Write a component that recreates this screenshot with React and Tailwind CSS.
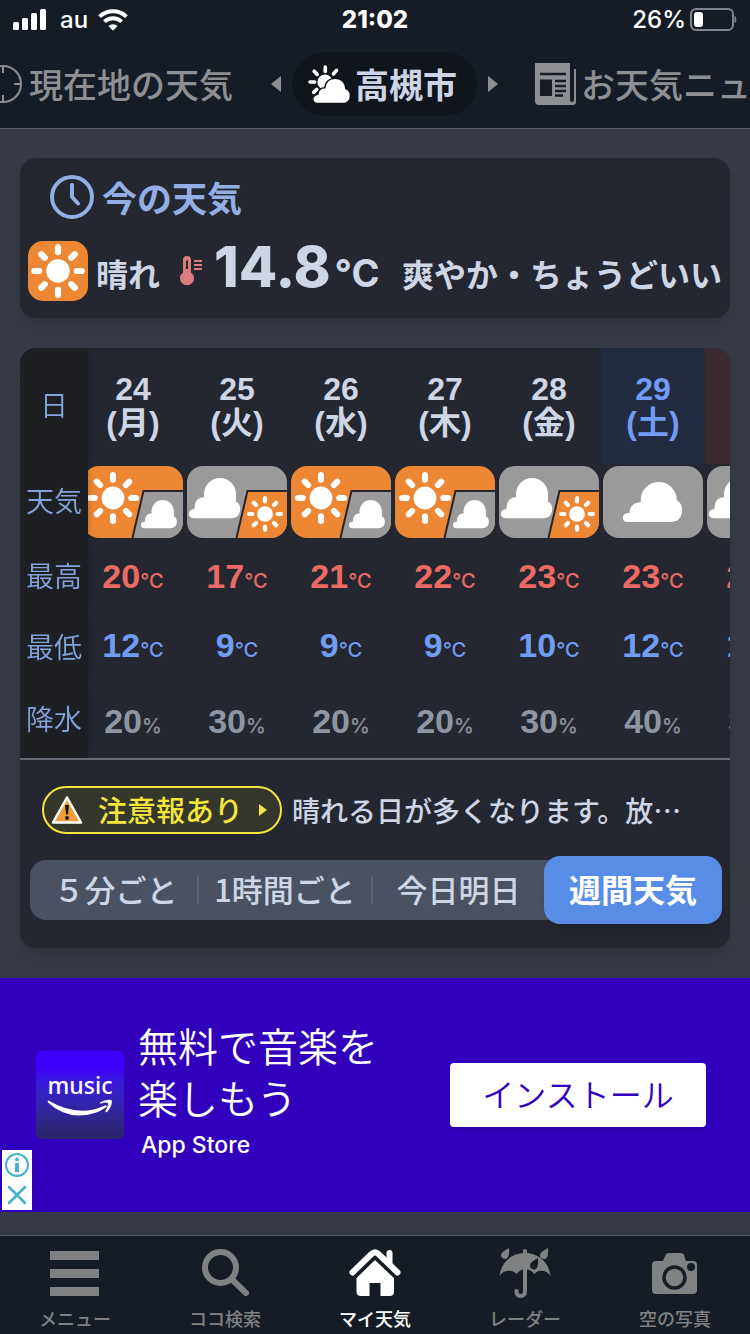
import React, { useLayoutEffect, useRef } from 'react';

const days = [
  { date: '24', day: '月', icon: 'sunCloud', high: '20', low: '12', rain: '20' },
  { date: '25', day: '火', icon: 'cloudSun', high: '17', low: '9', rain: '30' },
  { date: '26', day: '水', icon: 'sunCloud', high: '21', low: '9', rain: '20' },
  { date: '27', day: '木', icon: 'sunCloud', high: '22', low: '9', rain: '20' },
  { date: '28', day: '金', icon: 'cloudSun', high: '23', low: '10', rain: '30' },
  { date: '29', day: '土', icon: 'cloud', high: '23', low: '12', rain: '40' },
  { date: '30', day: '日', icon: 'cloudSun', high: '22', low: '13', rain: '30' },
];

const ICON_LABELS = {
  sunCloud: '晴れ時々曇り',
  cloudSun: '曇り時々晴れ',
  cloud: '曇り',
};

const ANGLES = [0, 45, 90, 135, 180, 225, 270, 315];

const Sun = ({ cx, cy, scale = 1 }) => (
  <g transform={`translate(${cx} ${cy}) scale(${scale})`} stroke="#fff" strokeWidth="6" strokeLinecap="round">
    <circle r="11.4" fill="#fff" stroke="none" />
    {ANGLES.map((a) => (
      <path key={a} d="M0 -18.2V-23" transform={`rotate(${a})`} />
    ))}
  </g>
);

const Cloud = ({ x = 0, y = 0, scale = 1 }) => (
  <g transform={`translate(${x} ${y}) scale(${scale})`} fill="#fff">
    <circle cx="31" cy="16" r="16" />
    <path d="M46.800 18V23.500Q51.300 25.500 51.300 31.500Q50.500 40.300 42 40.300H4.700Q0 40 0 35.600Q0.300 31 5.500 31Q5 19 17 19Z" />
  </g>
);

const WideCloud = () => (
  <g fill="#fff">
    <circle cx="55.7" cy="34" r="18" />
    <path d="M73 33.500Q79.200 37 79.200 44.500Q78 56 67.500 56H24.400Q20 56 19.800 51.500Q20 47 26.500 47Q27 36.500 38 36Z" />
  </g>
);

const WeatherIcon = ({ type, id }) => {
  const sunny = type === 'sunCloud';
  return (
    <svg viewBox="0 0 100 72" className="block w-[100px] h-[72px] mx-auto" role="img" aria-label={ICON_LABELS[type]}>
      <clipPath id={id}>
        <rect width="100" height="72" rx="16" />
      </clipPath>
      <g clipPath={`url(#${id})`}>
        <rect width="100" height="72" fill={sunny ? '#ee8733' : '#9a9a9a'} />
        {sunny && <Sun cx={30} cy={32} />}
        {type === 'cloudSun' && <Cloud x={2} y={12} />}
        {type === 'cloud' && <WideCloud />}
        {type !== 'cloud' && (
          <path d="M60.5 25H102V74H49Z" fill={sunny ? '#9a9a9a' : '#ee8733'} stroke="#24272f" strokeWidth="2" />
        )}
        {sunny && <Cloud x={58} y={34} scale={0.7} />}
        {type === 'cloudSun' && <Sun cx={78} cy={48} scale={0.69} />}
      </g>
    </svg>
  );
};

const StatusBar = () => (
  <div className="h-10 px-3 grid grid-cols-3 items-center text-white text-2xl font-medium font-['Inter',sans-serif]">
    <div className="flex items-center gap-[14px]">
      <svg viewBox="0 0 34 22" className="w-[34px] h-[22px]" fill="#fff">
        <rect x="1" y="13" width="6" height="8" rx="1.5" />
        <rect x="10" y="9" width="6" height="12" rx="1.5" />
        <rect x="19" y="4" width="6" height="17" rx="1.5" />
        <rect x="28" y="0" width="6" height="21" rx="1.5" />
      </svg>
      <span>au</span>
      <svg viewBox="0 0 30 22" className="w-[30px] h-[22px] -ml-1" fill="none" stroke="#fff" strokeWidth="4">
        <path d="M1.6 7.6A19.3 19.3 0 0 1 28.4 7.6" />
        <path d="M6.4 12.6A12.4 12.4 0 0 1 23.6 12.6" />
        <path d="M10.4 17A7 7 0 0 1 19.6 17L15 21.8Z" fill="#fff" stroke="none" />
      </svg>
    </div>
    <span className="text-center font-extrabold">21:02</span>
    <div className="flex items-center justify-end gap-1">
      <span>26%</span>
      <svg viewBox="0 0 48 24" className="w-12 h-6" fill="none">
        <rect x="1" y="1" width="42" height="21" rx="5" stroke="#80858c" strokeWidth="2" />
        <rect x="4" y="4" width="9" height="15" rx="3" fill="#fff" />
        <path d="M45 8.500Q47 11.500 45 14.500Z" fill="#80858c" stroke="#80858c" />
      </svg>
    </div>
  </div>
);

const LocationTabs = () => (
  <nav className="h-[88px] flex items-center overflow-hidden whitespace-nowrap text-[34px] leading-none font-medium text-[#8d8f93]">
    <button type="button" className="shrink-0 flex items-center gap-[7px] -ml-4">
      <svg viewBox="0 0 38 38" className="w-[38px] h-[38px]" fill="none" stroke="currentColor" strokeWidth="2">
        <circle cx="19" cy="19" r="18" />
        <path d="M19 1V8M19 30V37M30 19H37M1 19H8" />
      </svg>
      <span>現在地の天気</span>
    </button>
    <svg viewBox="0 0 10 16" className="shrink-0 w-[10px] h-4 ml-[38px] mr-[11px]" fill="#8d8f93">
      <path d="M10 0V16L0 8Z" />
    </svg>
    <button type="button" className="shrink-0 h-16 pl-4 pr-5 rounded-full bg-[#10141b] flex items-center gap-1 text-[#ccd4e6] font-bold">
      <svg viewBox="0 0 43 40" className="w-[43px] h-10">
        <g stroke="#fff" strokeWidth="3.600" strokeLinecap="round">
          <path d="M17.300 3V7.500M6.200 7.200L9.200 10.400M28.500 6.400L25.400 10M2 18H6.600M5.700 28.400L8.800 25.400" />
        </g>
        <circle cx="17" cy="18" r="7.600" fill="#fff" />
        <path
          d="M9.500 39.500C6 39.500 4 36.500 5 33.500C5.800 31.200 8 30.500 10 30C10 26.500 13 23.500 16.800 23.800C17.500 17.500 22 14.300 27.500 14.300C33.500 14.300 37.600 18.500 37.800 24.600C40.800 25.900 42.500 28.500 42.500 31.800C42.500 36.500 39.200 39.500 35 39.500Z"
          fill="#fff"
          stroke="#10141b"
          strokeWidth="1.500"
        />
      </svg>
      <span>高槻市</span>
    </button>
    <svg viewBox="0 0 10 16" className="shrink-0 w-[10px] h-4 ml-[11px] mr-9" fill="#8d8f93">
      <path d="M0 0V16L10 8Z" />
    </svg>
    <button type="button" className="shrink-0 flex items-center gap-1">
      <svg viewBox="0 0 43 42" className="w-[43px] h-[42px]">
        <path d="M1 0H36V37Q36 39 38 39Q40 39 40 37V6H42V39Q42 42 39 42H5Q1 42 1 38Z" fill="#8d8f93" />
        <path d="M6 11H32M21 18H32M21 23H32M21 28H32M21 32.500H29" stroke="#161c25" strokeWidth="2.500" />
        <path d="M6 16.500H18V33H6Z" fill="#161c25" />
      </svg>
      <span>お天気ニュ</span>
    </button>
  </nav>
);

const CurrentWeather = () => (
  <section className="rounded-2xl bg-[#24272f] shadow-lg h-40 px-2 pt-4">
    <h2 className="pl-[22px] flex items-center gap-2 text-[35px] leading-[46px] font-bold text-[#92aee3]">
      <svg viewBox="0 0 44 44" className="w-11 h-11" fill="none" stroke="currentColor" strokeWidth="4" strokeLinecap="round" strokeLinejoin="round">
        <circle cx="22" cy="22" r="20" />
        <path d="M22 10V22L28 28.500" />
      </svg>
      <span>今の天気</span>
    </h2>
    <div className="mt-[21px] flex items-center whitespace-nowrap text-[32px] leading-none font-bold text-[#ced6e6]">
      <svg viewBox="0 0 60 60" className="shrink-0 w-[60px] h-[60px]">
        <rect width="60" height="60" rx="15" fill="#ee8733" />
        <Sun cx={30} cy={30} scale={1.03} />
      </svg>
      <span className="ml-2 mt-1">晴れ</span>
      <svg viewBox="0 0 24 32" className="shrink-0 w-6 h-8 ml-5" fill="#d97d7d">
        <path d="M3 5Q3 1 7 1Q11 1 11 5V17.600A7 7 0 1 1 3 17.600Z" />
        <path d="M7 5.500V14" stroke="#24272f" strokeWidth="2" />
        <path d="M14 6H22M14 10H22M14 14H22" stroke="#d97d7d" strokeWidth="2" />
      </svg>
      <span className="ml-[10px] flex items-baseline gap-1 -mt-2 font-['Inter',sans-serif] text-[56px] font-extrabold">
        14.8
        <span className="text-[38px] font-bold">°C</span>
      </span>
      <span className="ml-auto mt-1">爽やか・ちょうどいい</span>
    </div>
  </section>
);

const RowLabel = ({ children }) => (
  <th
    scope="row"
    className="sticky left-0 z-10 w-[68px] p-0 pt-[2px] bg-[#1d1f23] text-[28px] leading-8 font-[350] text-[#84a2dc] shadow-[6px_0_6px_-5px_rgba(0,0,0,0.2)]"
  >
    {children}
  </th>
);

const dayStyle = {
  土: 'bg-[#222c40] text-[#719cf5]',
  日: 'bg-[#3a2c31] text-[#ec6a66]',
};

const Value = ({ children, unit, className = '' }) => (
  <td className={`p-0 text-[34px] leading-none font-bold ${className}`}>
    {children}
    <span className="font-['Inter',sans-serif] text-xl font-medium">{unit}</span>
  </td>
);

const WeeklyTable = () => {
  const scroller = useRef(null);

  useLayoutEffect(() => {
    scroller.current.scrollLeft = 7;
  }, []);

  return (
    <div ref={scroller} className="overflow-x-auto [scrollbar-width:none] rounded-t-2xl">
      <table className="w-[796px] table-fixed border-separate border-spacing-0 text-center font-['Liberation_Sans','Noto_Sans_CJK_JP',sans-serif]">
        <tbody>
          <tr className="h-[116px]">
            <RowLabel>日</RowLabel>
            {days.map((d) => (
              <th key={d.date} scope="col" className={`w-[104px] p-0 text-[32px] leading-[34px] font-bold ${dayStyle[d.day] || 'text-[#ced6e6]'}`}>
                {d.date}
                <br />({d.day})
              </th>
            ))}
          </tr>
          <tr className="h-[76px]">
            <RowLabel>天気</RowLabel>
            {days.map((d) => (
              <td key={d.date} className="p-0">
                <WeatherIcon type={d.icon} id={`clip-${d.date}`} />
              </td>
            ))}
          </tr>
          <tr className="h-[74px] text-[#ec6a66]">
            <RowLabel>最高</RowLabel>
            {days.map((d) => (
              <Value key={d.date} unit="°C">{d.high}</Value>
            ))}
          </tr>
          <tr className="h-[68px] text-[#719cf5]">
            <RowLabel>最低</RowLabel>
            {days.map((d) => (
              <Value key={d.date} unit="°C" className="pb-1">{d.low}</Value>
            ))}
          </tr>
          <tr className="h-[76px] text-[#8f96a3]">
            <RowLabel>降水</RowLabel>
            {days.map((d) => (
              <Value key={d.date} unit="%" className="pt-1">{d.rain}</Value>
            ))}
          </tr>
        </tbody>
      </table>
    </div>
  );
};

const RangeTabs = () => (
  <div className="ml-[10px] mr-2 h-[60px] rounded-2xl bg-[#4a5262] flex items-center text-[31px] leading-none font-medium text-[#ced6e6] whitespace-nowrap">
    <button type="button" className="flex-[163] h-7 flex items-center justify-center pl-1 pb-1 border-r-2 border-[#5c6474]">５分ごと</button>
    <button type="button" className="flex-[172] h-7 flex items-center justify-center pb-1 border-r-2 border-[#5c6474]">1時間ごと</button>
    <button type="button" className="flex-[171] h-7 flex items-center justify-center pb-1">今日明日</button>
    <button type="button" className="flex-[178] h-[68px] -my-1 pb-1 rounded-2xl bg-[#578de6] text-[32px] font-bold text-white shadow-lg">週間天気</button>
  </div>
);

const Forecast = () => (
  <section className="mt-[30px] rounded-2xl bg-[#24272f] shadow-lg pb-7">
    <WeeklyTable />
    <div className="border-t-2 border-[#676b75] pt-[26px] pl-[22px] pr-11 flex items-center gap-[10px]">
      <button type="button" className="shrink-0 w-[240px] h-12 rounded-full border-2 border-[#f3e63c] bg-[#36372c] flex items-center pl-[7px] text-[29px] leading-none font-medium text-[#f3e63c]">
        <svg viewBox="0 0 32 30" className="w-8 h-[30px] mr-[15px]">
          <path d="M16 2.500L30 27.500H2Z" fill="#f09c38" stroke="#fff" strokeWidth="2.500" strokeLinejoin="round" />
          <path d="M14 10H18L16.900 19.500H15.100Z" fill="#111" />
          <circle cx="16" cy="23" r="1.900" fill="#111" />
        </svg>
        <span className="pb-[2px]">注意報あり</span>
        <svg viewBox="0 0 8 12" className="w-2 h-3 ml-4" fill="currentColor">
          <path d="M0 0L8 6L0 12Z" />
        </svg>
      </button>
      <p className="truncate text-[28px] leading-[42px] font-medium text-[#ced6e6]">晴れる日が多くなります。放…</p>
    </div>
    <div className="mt-[26px]">
      <RangeTabs />
    </div>
  </section>
);

const AdBanner = () => (
  <aside className="relative mt-[30px] h-[234px] bg-[#3000bd] flex items-center pl-9 pr-11 text-white">
    <div className="shrink-0 w-[88px] h-[88px] rounded-md bg-linear-to-b from-[#3d00fa] from-20% to-[#2c2465] flex flex-col items-center pt-5">
      <span className="font-['Noto_Sans',sans-serif] text-[23px] leading-[28px] font-medium">music</span>
      <svg viewBox="0 0 66 20" className="w-[66px] h-5">
        <path d="M1.500 1.500Q31 19 58 6.500Q60.500 6 59.500 8Q48 16.500 32 16.500Q14 16 1 3.500Q0 1 1.500 1.500Z" fill="#fff" />
        <path d="M53 3.500Q59 0 64.500 1Q66 6 60 13Q58 14 58.500 12Q61.500 6 61 4Q58.500 3 54 4.500Q52 4.500 53 3.500Z" fill="#fff" />
      </svg>
    </div>
    <div className="ml-[14px] pb-2">
      <p className="text-[40px] leading-[52px] font-[350]">
        無料で音楽を
        <br />
        楽しもう
      </p>
      <p className="ml-[3px] mt-1 text-[23px] leading-9 font-medium font-['Inter',sans-serif]">App Store</p>
    </div>
    <button type="button" className="ml-auto w-64 h-16 rounded-sm bg-white pb-1 text-[32px] leading-none font-[350] text-[#3000bd] shadow-md">インストール</button>
    <div className="absolute left-[2px] bottom-[2px] w-[30px] h-[60px] bg-white text-[#45b0cf] flex flex-col">
      <button type="button" aria-label="広告について">
        <svg viewBox="0 0 30 30" className="w-[30px] h-[30px]" fill="none" stroke="currentColor" strokeWidth="2">
          <circle cx="15" cy="15" r="11" />
          <path d="M15 13V22" strokeWidth="4" />
          <circle cx="15" cy="9.500" r="2" fill="currentColor" stroke="none" />
        </svg>
      </button>
      <button type="button" aria-label="閉じる">
        <svg viewBox="0 0 30 30" className="w-[30px] h-[30px]" stroke="currentColor" strokeWidth="2.500" strokeLinecap="round">
          <path d="M7 7L23 23M23 7L7 23" />
        </svg>
      </button>
    </div>
  </aside>
);

const MenuIcon = () => (
  <svg viewBox="0 0 52 50" className="w-[52px] h-[50px]" fill="currentColor">
    <path d="M1 3H50V12H1ZM1 21H50V30H1ZM1 39H50V48H1Z" />
  </svg>
);

const SearchIcon = () => (
  <svg viewBox="0 0 52 50" className="w-[52px] h-[50px]" fill="none" stroke="currentColor" strokeWidth="6" strokeLinecap="round">
    <circle cx="21.500" cy="19.500" r="15.500" />
    <path d="M34 32.500L47 45" />
  </svg>
);

const HomeIcon = () => (
  <svg viewBox="0 0 52 50" className="w-[52px] h-[50px]">
    <path d="M26 12L45 30V43.500Q45 48 40.500 48H31.500V35H20.500V48H12Q7.500 48 7.500 43.500V30Z" fill="currentColor" />
    <path d="M3.500 24.500L22.500 6Q26 2.800 29.500 6L48.500 24.500" fill="none" stroke="currentColor" strokeWidth="6" strokeLinecap="round" />
    <path d="M40.500 5V14" stroke="currentColor" strokeWidth="6" strokeLinecap="round" />
    <path d="M5.500 29.500L24.500 11.500Q26 10.200 27.500 11.500L46.500 29.500" fill="none" stroke="#161c25" strokeWidth="2" />
  </svg>
);

const UmbrellaIcon = () => (
  <svg viewBox="0 0 52 50" className="w-[52px] h-[50px]" fill="currentColor">
    <path d="M0.500 28C2 14 13 5 26 5S50 14 51.500 28C48 22 39 21 35.500 26Q33 22 26 21Q20 22 17.500 26C13 21 4 22 0.500 28Z" />
    <path d="M26 3V43Q26 48 21.500 48Q17.500 48 17.500 43" fill="none" stroke="currentColor" strokeWidth="4" strokeLinecap="round" />
    <path d="M10 0Q11 10 6.500 11Q2 11 2 7Q2 4 10 0Z" />
    <path d="M49 0Q50 10 46 11Q41 11 41 7Q41 4 49 0Z" />
    <path d="M39 10Q40 20 36 21.500Q31 21.500 31 17.500Q31 14 39 10Z" fill="#161c25" />
  </svg>
);

const CameraIcon = () => (
  <svg viewBox="0 0 52 50" className="w-[52px] h-[50px]">
    <path d="M14 13L16.500 7Q17.500 5 20 5H32Q34 5 35 7L37 13H44Q48 13 48 17V42Q48 46 44 46H7Q3 46 3 42V17Q3 13 7 13Z" fill="currentColor" />
    <circle cx="25.500" cy="29.500" r="10.500" fill="none" stroke="#161c25" strokeWidth="3.500" />
    <circle cx="42" cy="19" r="4" fill="#161c25" />
  </svg>
);

const navItems = [
  { label: 'メニュー', Icon: MenuIcon },
  { label: 'ココ検索', Icon: SearchIcon },
  { label: 'マイ天気', Icon: HomeIcon, active: true },
  { label: 'レーダー', Icon: UmbrellaIcon },
  { label: '空の写真', Icon: CameraIcon },
];

const BottomNav = () => (
  <nav className="mt-auto h-[99px] border-t border-[#50555f] bg-[#161c25] grid grid-cols-5 text-lg leading-6 font-medium">
    {navItems.map(({ label, Icon, active }) => (
      <a key={label} href="#" className={`flex flex-col items-center pt-3 gap-2 ${active ? 'text-white' : 'text-[#808182]'}`}>
        <Icon />
        {label}
      </a>
    ))}
  </nav>
);

const App = () => (
  <div className="min-h-screen flex flex-col bg-[#363a44] font-['Noto_Sans_CJK_JP',sans-serif]">
    <header className="bg-[#161c25] border-b border-[#555963]">
      <StatusBar />
      <LocationTabs />
    </header>
    <main className="pt-[29px] pb-[23px]">
      <div className="px-5">
        <CurrentWeather />
        <Forecast />
      </div>
      <AdBanner />
    </main>
    <BottomNav />
  </div>
);

export default App;
